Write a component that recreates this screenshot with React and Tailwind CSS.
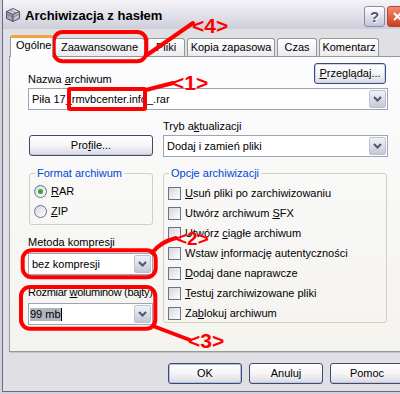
import React from 'react';

const U = ({ children }) => <span className="underline decoration-1 underline-offset-[1px]">{children}</span>;

const Chevron = () => (
  <svg width="9" height="6" viewBox="0 0 9 6">
    <path d="M1 1L4.5 4.5L8 1" fill="none" stroke="#4b5679" strokeWidth="2" />
  </svg>
);

const Combo = ({ className = '', children }) => (
  <div className={`h-[22px] flex items-center border border-[#9aa5ba] bg-white pr-[1px] ${className}`}>
    <div className="flex-1 min-w-0 flex items-center whitespace-nowrap overflow-hidden">{children}</div>
    <div className="w-[17px] h-[18px] shrink-0 flex items-center justify-center rounded-[2px] border border-[#bcc1d2] bg-linear-to-b from-[#f1f2f7] to-[#c5c8d7]">
      <Chevron />
    </div>
  </div>
);

const Btn = ({ className = '', def = false, children }) => (
  <div
    className={`h-[21px] shrink-0 flex items-center justify-center rounded-[3px] border border-[#3d4b73] bg-linear-to-b from-white via-[#f5f5f7] to-[#d9d9e2] ${
      def ? 'shadow-[inset_0_0_0_1px_#b3bfe6]' : 'shadow-[inset_0_-1px_0_#c6c6d2]'
    } ${className}`}
  >
    {children}
  </div>
);

const Check = ({ children }) => (
  <div className="flex items-center h-[13px] gap-[4px] whitespace-nowrap">
    <div className="w-[13px] h-[13px] shrink-0 border border-[#66738d] bg-linear-to-br from-[#d5d5dc] to-white" />
    <span className="leading-[13px]">{children}</span>
  </div>
);

const Radio = ({ checked, children }) => (
  <div className="flex items-center h-[13px] gap-[4px]">
    <div className="w-[13px] h-[13px] shrink-0 rounded-full border border-[#66738d] bg-linear-to-br from-[#d8d8de] to-white flex items-center justify-center">
      {checked && <div className="w-[5px] h-[5px] rounded-full bg-[#2fae2f]" />}
    </div>
    <span className="leading-[13px]">{children}</span>
  </div>
);

const Tab = ({ className = '', children }) => (
  <div className={`h-[18px] shrink-0 flex justify-center pt-[2px] border-x border-t border-[#919b9c] rounded-t-[3px] bg-linear-to-b from-white to-[#ebebef] whitespace-nowrap ${className}`}>
    {children}
  </div>
);

/* ── red annotations drawn over the dialog ─────────────────────────────── */
const Marks = () => (
  <svg className="absolute inset-0 pointer-events-none" width="400" height="394" viewBox="0 0 400 394" fill="none">
    <g stroke="#ff0000" strokeWidth="4" strokeLinecap="round" strokeLinejoin="round">
      <rect x="53.7" y="32" width="92.6" height="29.3" rx="9" />
      <path d="M147 55L193 23" />
      <rect x="69" y="89" width="76" height="20" rx="1" />
      <path d="M146 90L173 83" />
      <rect x="22.7" y="250.3" width="133" height="27" rx="9" />
      <path d="M152 253Q160 242 176 238" />
      <rect x="21" y="287" width="134.3" height="41.7" rx="9" />
      <path d="M153 326L190 340" />
    </g>
    <g fill="#ff0000" fontFamily="'Liberation Sans', Arial, sans-serif" fontWeight="700">
      <text x="192" y="33" fontSize="21">&lt;4&gt;</text>
      <text x="172" y="90" fontSize="21">&lt;1&gt;</text>
      <text x="176" y="245" fontSize="19">&lt;2&gt;</text>
      <text x="188" y="348" fontSize="21">&lt;3&gt;</text>
    </g>
  </svg>
);

export default function App() {
  return (
    <div className="relative w-[400px] h-[394px] overflow-hidden bg-[#e0dfe3] text-[11px] leading-[13px] text-black font-['Liberation_Sans',Arial,sans-serif]">
      <div className="w-[414px] h-[394px] pl-[2px] pb-[2px] bg-[#d2d2de]">
        <div className="h-full border-l border-b border-[#6a6a88] bg-[#e0dfe3] flex flex-col">
          {/* title bar */}
          <div className="h-[29px] shrink-0 flex items-start pr-[6px] bg-linear-to-b from-[#f4f4f8] via-[#e2e2ea] to-[#cdcdda]">
            <svg className="ml-[2px] mt-[7px] shrink-0" width="16" height="16" viewBox="0 0 16 16">
              <path d="M1.5 4.5L8 1.5L14.5 4.5L8 7.5Z" fill="#e2e2e8" stroke="#55556a" />
              <path d="M1.5 4.5L8 7.5V14.5L1.5 11.5Z" fill="#a2a2b0" stroke="#55556a" />
              <path d="M8 7.5L14.5 4.5V11.5L8 14.5Z" fill="#c2c2cc" stroke="#55556a" />
              <path d="M1.5 7L8 10L14.5 7M4.5 3L11 6" fill="none" stroke="#6a6a7e" strokeWidth="0.8" />
            </svg>
            <span className="ml-[4px] mt-[8px] text-[13px] leading-[15px] font-bold whitespace-nowrap">Archiwizacja z hasłem</span>
            <div className="flex-1" />
            <div className="mt-[6px] w-[21px] h-[21px] shrink-0 rounded-[3px] border border-[#8a8aa8] bg-linear-to-b from-white to-[#c4c4d8] flex items-center justify-center text-[15px] leading-[15px] font-bold text-[#55557a] [text-shadow:1px_1px_0_#fff]">
              ?
            </div>
            <div className="ml-[2px] mt-[6px] w-[21px] h-[21px] shrink-0 rounded-[3px] border border-[#b8412a] bg-linear-to-b from-[#f08a70] to-[#cc3c1c] flex items-center justify-center">
              <svg width="11" height="11" viewBox="0 0 11 11">
                <path d="M2 2L9 9M9 2L2 9" stroke="#fff" strokeWidth="2" />
              </svg>
            </div>
          </div>

          {/* body */}
          <div className="flex-1 pl-[6px] flex flex-col">
            <div className="h-[27px] shrink-0 flex items-end pl-[1px] gap-[2px]">
              <div className="relative z-10 -mb-px h-[22px] w-[43px] shrink-0 pl-[5px] pt-[1px] border-x border-[#919b9c] border-t-[3px] border-t-[#f0a33a] rounded-t-[3px] bg-[#fcfcfe]">
                Ogólne
              </div>
              <Tab className="w-[91px] -ml-[1px]">Zaawansowane</Tab>
              <Tab className="w-[38px]">Pliki</Tab>
              <Tab className="w-[88px]">Kopia zapasowa</Tab>
              <Tab className="w-[40px]">Czas</Tab>
              <Tab className="w-[60px]">Komentarz</Tab>
            </div>

            <div className="h-[296px] w-[398px] shrink-0 border border-[#919b9c] bg-linear-to-b from-[#fcfcfe] to-[#f4f3ee] pt-[6px] pl-[18px] shadow-[1px_1px_0_#c4c4cc]">
              <div className="flex w-[360px] h-[21px]">
                <span className="mt-[10px] whitespace-nowrap">
                  Nazwa <U>a</U>rchiwum
                </span>
                <Btn className="ml-auto mr-[2px] w-[72px] shadow-[inset_0_0_0_1px_#c9d3f0]">
                  <U>P</U>rzeglądaj...
                </Btn>
              </div>
              <Combo className="mt-[4px] w-[360px] pl-[3px]">Piła 17_rmvbcenter.info_.rar</Combo>

              <div className="flex gap-[10px]">
                <div className="w-[125px] flex flex-col">
                  <Btn className="mt-[25px] ml-[1px] w-[124px]">
                    Pro<U>f</U>ile...
                  </Btn>
                  <fieldset className="mt-[11px] ml-[1px] w-[124px] border border-[#d0d0bf] rounded-[3px]">
                    <legend className="ml-[5px] px-[2px] text-[#0046d5] leading-[13px]">Format archiwum</legend>
                    <div className="pt-[5px] pb-[6px] pl-[4px] flex flex-col gap-[7px]">
                      <Radio checked>
                        <U>R</U>AR
                      </Radio>
                      <Radio>
                        <U>Z</U>IP
                      </Radio>
                    </div>
                  </fieldset>
                  <span className="mt-[11px] whitespace-nowrap">Metoda kompresji</span>
                  <Combo className="mt-[4px] w-[125px] pl-[3px]">bez kompresji</Combo>
                  <span className="mt-[11px] whitespace-nowrap tracking-[-0.3px]">
                    Rozmiar <U>w</U>oluminów (bajty)
                  </span>
                  <Combo className="mt-[4px] w-[125px] pl-[1px]">
                    <span className="bg-[#b2b4bf] leading-[13px]">99 mb</span>
                    <span className="w-px h-[13px] bg-black" />
                  </Combo>
                </div>

                <div className="w-[225px] flex flex-col">
                  <span className="mt-[10px] whitespace-nowrap">
                    Tryb a<U>k</U>tualizacji
                  </span>
                  <Combo className="mt-[2px] w-[225px] pl-[3px]">Dodaj i zamień pliki</Combo>
                  <fieldset className="mt-[10px] w-[224px] border border-[#d0d0bf] rounded-[3px]">
                    <legend className="ml-[5px] px-[2px] text-[#0046d5] leading-[13px]">Opcje archiwizacji</legend>
                    <div className="pt-[7px] pb-[2px] pl-[4px] flex flex-col gap-[7px]">
                      <Check><U>U</U>suń pliki po zarchiwizowaniu</Check>
                      <Check>Utwórz archiwum <U>S</U>FX</Check>
                      <Check>Utwórz <U>c</U>iągłe archiwum</Check>
                      <Check>Wstaw <U>i</U>nformację autentyczności</Check>
                      <Check><U>D</U>odaj dane naprawcze</Check>
                      <Check><U>T</U>estuj zarchiwizowane pliki</Check>
                      <Check>Za<U>b</U>lokuj archiwum</Check>
                    </div>
                  </fieldset>
                </div>
              </div>
            </div>

            <div className="mt-[11px] ml-[159px] flex gap-[7px]">
              <Btn def className="w-[74px]">OK</Btn>
              <Btn className="w-[74px]">Anuluj</Btn>
              <Btn className="w-[74px]">Pomoc</Btn>
            </div>
          </div>
        </div>
      </div>
      <Marks />
    </div>
  );
}
